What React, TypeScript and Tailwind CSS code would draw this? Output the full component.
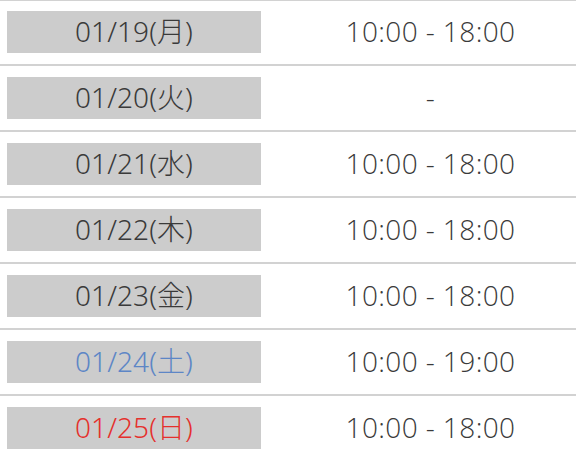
import React from "react";

const rows = [
  { date: "01/19(月)", time: "10:00 - 18:00", color: "text-[#3a3a3a]" },
  { date: "01/20(火)", time: "-", color: "text-[#3a3a3a]" },
  { date: "01/21(水)", time: "10:00 - 18:00", color: "text-[#3a3a3a]" },
  { date: "01/22(木)", time: "10:00 - 18:00", color: "text-[#3a3a3a]" },
  { date: "01/23(金)", time: "10:00 - 18:00", color: "text-[#3a3a3a]" },
  { date: "01/24(土)", time: "10:00 - 19:00", color: "text-[#5d86c6]" },
  { date: "01/25(日)", time: "10:00 - 18:00", color: "text-[#e5302c]" },
];

export default function App() {
  return (
    <div className="w-[576px] h-[456px] overflow-hidden bg-white">
      {rows.map((r, i) => (
        <div
          key={i}
          className={
            i === 0
              ? "grid grid-cols-[285px_1fr] items-center border-t border-[#d2d2d2] pt-[10px] pb-[11px]"
              : "grid grid-cols-[285px_1fr] items-center border-t-2 border-[#d2d2d2] py-[11px]"
          }
        >
          <div className="pl-[7px]">
            <div
              className={`w-[254px] h-[42px] pb-[3px] bg-[#cccccc] flex items-center justify-center text-[28px] font-light tracking-[0.1px] ${r.color}`}
              style={{ fontFamily: '"Noto Sans", "Noto Sans CJK JP", sans-serif' }}
            >
              {r.date}
            </div>
          </div>
          <div
            className="flex items-center justify-center h-[42px] pb-[2px] text-[28px] font-light tracking-[0.4px] text-[#3a3a3a]"
            style={{ fontFamily: '"Open Sans", sans-serif' }}
          >
            {r.time}
          </div>
        </div>
      ))}
    </div>
  );
}
